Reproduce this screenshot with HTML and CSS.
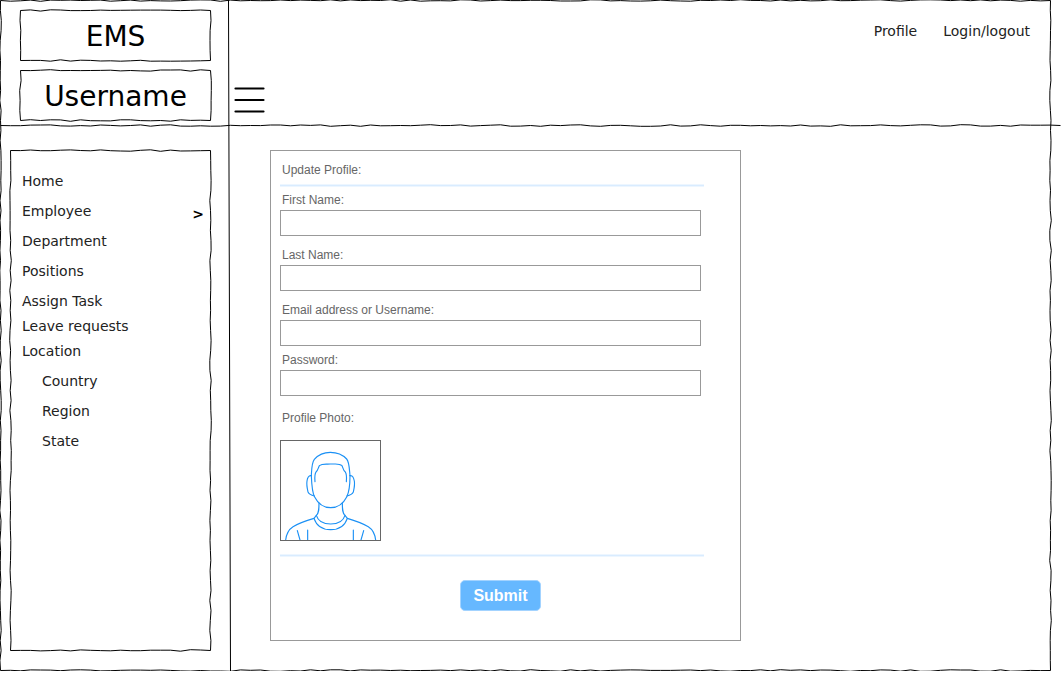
FILE: index.html
```html
<!DOCTYPE html>
<html lang="en">
<head>
<meta charset="utf-8">
<meta name="viewport" content="width=device-width, initial-scale=1">
<title>EMS - Update Profile</title>
<link rel="stylesheet" href="styles.css">
</head>
<body>
<div class="page">
  <svg class="sketch" data-shape="box" data-seed="7" aria-hidden="true"></svg>
  <header class="header">
    <svg class="sketch" data-shape="bottom" data-seed="21" aria-hidden="true"></svg>
    <div class="brand">
      <h1 class="brand-box"><svg class="sketch" data-shape="box" data-seed="3" aria-hidden="true"></svg>EMS</h1>
      <p class="brand-box"><svg class="sketch" data-shape="box" data-seed="12" aria-hidden="true"></svg>Username</p>
    </div>
    <div class="topbar">
      <button class="menu-button" type="button" aria-label="Toggle menu">
        <svg width="32" height="28" viewBox="0 0 32 28" fill="none" stroke="#000" stroke-width="2.2" stroke-linecap="round" aria-hidden="true"><path d="M1.500 2.500H29.500M1.500 14H29.500M1.500 25.500H29.500"/></svg>
      </button>
      <nav class="account" aria-label="Account">
        <a href="#profile">Profile</a>
        <a href="#login">Login/logout</a>
      </nav>
    </div>
  </header>
  <div class="body">
    <aside class="sidebar">
      <nav class="menu" aria-label="Main">
        <svg class="sketch" data-shape="box" data-seed="33" aria-hidden="true"></svg>
        <ul class="menu-list">
          <li><a href="#home">Home</a></li>
          <li><a class="has-arrow" href="#employee">Employee <span class="arrow">&gt;</span></a></li>
          <li><a href="#department">Department</a></li>
          <li><a href="#positions">Positions</a></li>
          <li class="tight"><a href="#assign">Assign Task</a></li>
          <li class="tight"><a href="#leave">Leave requests</a></li>
          <li><a href="#location">Location</a>
            <ul class="submenu">
              <li><a href="#country">Country</a></li>
              <li><a href="#region">Region</a></li>
              <li><a href="#state">State</a></li>
            </ul>
          </li>
        </ul>
      </nav>
    </aside>
    <main class="main">
      <form class="panel">
        <h2 class="panel-title">Update Profile:</h2>
        <hr class="rule">
        <div class="field"><label for="first">First Name:</label><input id="first" type="text"></div>
        <div class="field"><label for="last">Last Name:</label><input id="last" type="text"></div>
        <div class="field field-close"><label for="email">Email address or Username:</label><input id="email" type="text"></div>
        <div class="field"><label for="password">Password:</label><input id="password" type="password"></div>
        <div class="photo">
          <p class="photo-label">Profile Photo:</p>
          <svg class="avatar" viewBox="33 33 297 297" role="img" aria-label="Profile photo" fill="none" stroke="#1a90f5" stroke-width="3.4" stroke-linecap="round" stroke-linejoin="round">
            <path d="M124 137C125 118 125 98 133 88C146 73 164 67 181 67C199 67 217 73 230 87C238 96 238 117 240 137"/>
            <path d="M124 137C125 164 126 187 134 201C144 221 162 233 182 233C202 233 220 221 230 201C238 185 240 161 240 137"/>
            <path d="M135 155C134 143 133 134 138 126C144 121 145 113 148 107C157 100 167 103 181 102C195 103 207 99 216 107C219 113 219 121 226 126C231 134 230 143 229 155"/>
            <path d="M124 137C116 135 112 144 111 153C109 165 112 177 114 186C118 194 125 196 133 198M240 137C248 135 251 144 253 153C255 165 252 177 250 186C246 194 239 196 231 198"/>
            <path d="M147 219C147 237 147 249 139 256L132 265C108 272 84 281 69 290C55 299 49 312 47 330M217 219C217 237 217 249 225 256L232 265C256 272 279 281 295 290C309 299 315 312 317 330"/>
            <path d="M139 256C145 276 162 282 182 282C202 282 219 276 225 256M132 265C140 289 159 299 182 299C205 299 224 289 232 265M82 302L90 330M113 300V330M250 300V330M281 302L273 330"/>
          </svg>
        </div>
        <hr class="rule">
        <div class="actions"><button class="submit" type="submit">Submit</button></div>
      </form>
    </main>
  </div>
  <svg class="divider" viewBox="0 0 3 672" preserveAspectRatio="none" aria-hidden="true"><path d="M0.500 0L2.500 672" stroke="#000"/></svg>
</div>
<script src="script.js"></script>
</body>
</html>
```
FILE: styles.css
```css
* { box-sizing: border-box; }
body {
  margin: 0;
  background: #fff;
  color: #000;
  font-family: "DejaVu Sans", Verdana, sans-serif;
  font-size: 14px;
  line-height: 20px;
}
h1, h2, p, ul { margin: 0; padding: 0; font-weight: normal; }
ul { list-style: none; }
a { color: #222; text-decoration: none; }

.page {
  position: relative;
  display: flex;
  flex-direction: column;
  min-height: calc(100vh - 4px);
  margin-right: 10px;
}
.sketch {
  position: absolute;
  inset: 0;
  width: 100%;
  height: 100%;
  overflow: visible;
  pointer-events: none;
  fill: none;
  stroke: #000;
}
.divider {
  position: absolute;
  top: 0;
  left: 228px;
  width: 3px;
  height: calc(100% + 1px);
  pointer-events: none;
}

.header {
  position: relative;
  display: flex;
  height: 126px;
  margin-right: -10px;
}
.brand {
  display: flex;
  flex-direction: column;
  gap: 9px;
  flex: 0 0 229px;
  padding: 10px 18px 0 20px;
}
.brand-box {
  position: relative;
  height: 51px;
  font-size: 28px;
  line-height: 53px;
  text-align: center;
}
.topbar {
  display: flex;
  flex: 1;
  justify-content: space-between;
  align-items: flex-start;
  padding: 21px 31px 0 5px;
}
.menu-button {
  display: flex;
  margin: 65px 0 0;
  padding: 0;
  border: 0;
  background: none;
}
.account { display: flex; gap: 26px; }

.body { display: flex; flex: 1; }
.sidebar {
  display: flex;
  flex: 0 0 229px;
  padding: 24px 18px 20px 10px;
}
.menu { position: relative; flex: 1; padding: 21px 7px 0 12px; }
.menu-list li { padding-bottom: 10px; }
.menu-list .tight { padding-bottom: 5px; }
.menu-list a { display: block; }
.menu-list .has-arrow { display: flex; justify-content: space-between; }
.arrow {
  height: 20px;
  padding-top: 3px;
  color: #000;
  font-size: 14px;
  font-weight: bold;
}
.submenu { padding: 10px 0 0 20px; }

.main { flex: 1; padding: 24px 20px 30px 41px; }
.panel {
  max-width: 471px;
  padding: 9px 19px 29px 9px;
  border: 1px solid #999;
  color: #666;
  font-family: "Liberation Sans", Arial, sans-serif;
  font-size: 12px;
}
.panel-title { padding-left: 2px; font-size: 12px; line-height: 20px; }
.rule {
  max-width: 424px;
  height: 3px;
  margin: 4px 0 3px;
  border: solid #edf6ff;
  border-width: 1px 0;
  background: #d9ecff;
}
.field { max-width: 421px; margin-bottom: 9px; }
.field-close { margin-bottom: 4px; }
.field label { display: block; padding-left: 2px; }
.field input {
  display: block;
  width: 100%;
  height: 26px;
  padding: 0 6px;
  border: 1px solid #999;
  border-radius: 0;
  background: #fff;
  font: inherit;
}
.photo { padding: 3px 0 9px; }
.photo-label { padding: 0 0 12px 2px; }
.avatar {
  display: block;
  width: 101px;
  height: 101px;
  border: 1px solid #666;
}
.actions { display: flex; justify-content: center; padding-top: 20px; }
.submit {
  width: 81px;
  height: 31px;
  padding: 0;
  border: 1px solid #a3d3ff;
  border-radius: 5px;
  background: #66b8ff;
  color: #fff;
  font: bold 16px "Liberation Sans", Arial, sans-serif;
}
```
FILE: script.js
```js
// Draws hand-sketched outlines: each edge is a polyline with a small wobble every 10px.
function randomFrom(seed) {
  let s = seed * 7919 % 233280;
  return () => (s = (s * 9301 + 49297) % 233280) / 233280;
}
function edge(x1, y1, x2, y2, rand) {
  const length = Math.hypot(x2 - x1, y2 - y1);
  const horizontal = y1 === y2;
  const points = [[x1, y1]];
  for (let d = 10; d < length - 5; d += 10) {
    const t = d / length;
    const off = rand() * 1.6 - 0.8;
    points.push([
      x1 + (x2 - x1) * t + (horizontal ? 0 : off),
      y1 + (y2 - y1) * t + (horizontal ? off : 0)
    ]);
  }
  points.push([x2, y2]);
  return "M" + points.map(p => p.map(n => n.toFixed(1)).join(" ")).join("L");
}
function draw(svg) {
  const box = svg.getBoundingClientRect();
  const rand = randomFrom(Number(svg.dataset.seed));
  const r = box.width - 0.5, b = box.height - 0.5, o = 0.5;
  let d = edge(o, b, r, b, rand);
  if (svg.dataset.shape === "box") {
    d += edge(o, o, r, o, rand) + edge(r, o, r, b, rand) + edge(o, o, o, b, rand);
  }
  svg.innerHTML = `<path d="${d}"/>`;
}
function drawAll() {
  document.querySelectorAll(".sketch").forEach(draw);
}
drawAll();
window.addEventListener("resize", drawAll);
```
